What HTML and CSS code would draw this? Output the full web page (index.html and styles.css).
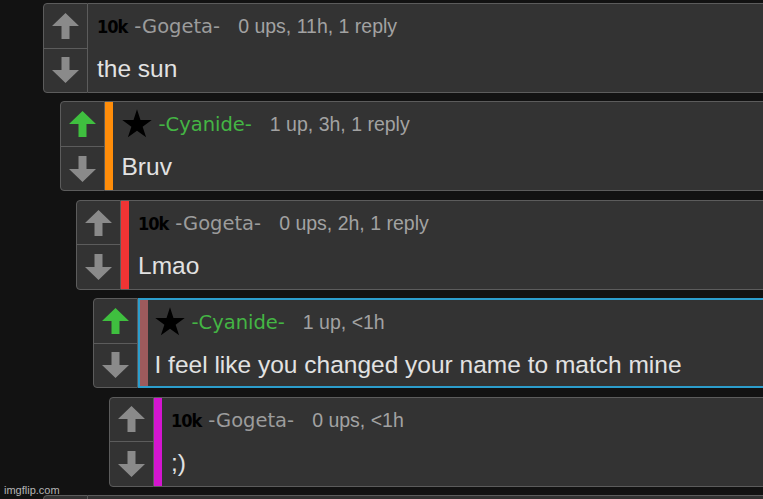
FILE: index.html
```html
<!DOCTYPE html>
<html>
<head>
<meta charset="utf-8">
<link rel="stylesheet" href="styles.css">
</head>
<body>
<div class="thread">

  <div class="comment lvl0">
    <div class="votes">
      <div class="vote"><svg class="arrow" width="27" height="26" viewBox="0 0 27 26"><path d="M13.5 0 L27 13 H17.5 V26 H9.5 V13 H0 Z"/></svg></div>
      <div class="vote"><svg class="arrow" width="27" height="26" viewBox="0 0 27 26"><path d="M13.5 26 L27 13 H17.5 V0 H9.5 V13 H0 Z"/></svg></div>
    </div>
    <div class="main">
      <div class="content">
        <div class="head"><span class="badge">10k</span><span class="name">-Gogeta-</span><span class="meta">0 ups, 11h, 1 reply</span></div>
        <div class="text">the sun</div>
      </div>
    </div>
  </div>

  <div class="comment lvl1">
    <div class="votes">
      <div class="vote"><svg class="arrow up-on" width="27" height="26" viewBox="0 0 27 26"><path d="M13.5 0 L27 13 H17.5 V26 H9.5 V13 H0 Z"/></svg></div>
      <div class="vote"><svg class="arrow" width="27" height="26" viewBox="0 0 27 26"><path d="M13.5 26 L27 13 H17.5 V0 H9.5 V13 H0 Z"/></svg></div>
    </div>
    <div class="main">
      <div class="bar orange"></div>
      <div class="content">
        <div class="head"><svg class="star" width="30" height="29" viewBox="0 0 30 29"><polygon points="15,0.3 18.48,11.01 29.74,11.01 20.63,17.63 24.11,28.34 15,21.72 5.89,28.34 9.37,17.63 0.26,11.01 11.52,11.01"/></svg><span class="name green">-Cyanide-</span><span class="meta">1 up, 3h, 1 reply</span></div>
        <div class="text">Bruv</div>
      </div>
    </div>
  </div>

  <div class="comment lvl2">
    <div class="votes">
      <div class="vote"><svg class="arrow" width="27" height="26" viewBox="0 0 27 26"><path d="M13.5 0 L27 13 H17.5 V26 H9.5 V13 H0 Z"/></svg></div>
      <div class="vote"><svg class="arrow" width="27" height="26" viewBox="0 0 27 26"><path d="M13.5 26 L27 13 H17.5 V0 H9.5 V13 H0 Z"/></svg></div>
    </div>
    <div class="main">
      <div class="bar red"></div>
      <div class="content">
        <div class="head"><span class="badge">10k</span><span class="name">-Gogeta-</span><span class="meta">0 ups, 2h, 1 reply</span></div>
        <div class="text">Lmao</div>
      </div>
    </div>
  </div>

  <div class="comment lvl3">
    <div class="votes">
      <div class="vote"><svg class="arrow up-on" width="27" height="26" viewBox="0 0 27 26"><path d="M13.5 0 L27 13 H17.5 V26 H9.5 V13 H0 Z"/></svg></div>
      <div class="vote"><svg class="arrow" width="27" height="26" viewBox="0 0 27 26"><path d="M13.5 26 L27 13 H17.5 V0 H9.5 V13 H0 Z"/></svg></div>
    </div>
    <div class="main highlight">
      <div class="bar brown"></div>
      <div class="content">
        <div class="head"><svg class="star" width="30" height="29" viewBox="0 0 30 29"><polygon points="15,0.3 18.48,11.01 29.74,11.01 20.63,17.63 24.11,28.34 15,21.72 5.89,28.34 9.37,17.63 0.26,11.01 11.52,11.01"/></svg><span class="name green">-Cyanide-</span><span class="meta">1 up, &lt;1h</span></div>
        <div class="text">I feel like you changed your name to match mine</div>
      </div>
    </div>
  </div>

  <div class="comment lvl4">
    <div class="votes">
      <div class="vote"><svg class="arrow" width="27" height="26" viewBox="0 0 27 26"><path d="M13.5 0 L27 13 H17.5 V26 H9.5 V13 H0 Z"/></svg></div>
      <div class="vote"><svg class="arrow" width="27" height="26" viewBox="0 0 27 26"><path d="M13.5 26 L27 13 H17.5 V0 H9.5 V13 H0 Z"/></svg></div>
    </div>
    <div class="main">
      <div class="bar magenta"></div>
      <div class="content">
        <div class="head"><span class="badge">10k</span><span class="name">-Gogeta-</span><span class="meta">0 ups, &lt;1h</span></div>
        <div class="text">;)</div>
      </div>
    </div>
  </div>

  <div class="comment lvl0">
    <div class="votes">
      <div class="vote"><svg class="arrow" width="27" height="26" viewBox="0 0 27 26"><path d="M13.5 0 L27 13 H17.5 V26 H9.5 V13 H0 Z"/></svg></div>
      <div class="vote"><svg class="arrow" width="27" height="26" viewBox="0 0 27 26"><path d="M13.5 26 L27 13 H17.5 V0 H9.5 V13 H0 Z"/></svg></div>
    </div>
    <div class="main">
      <div class="content">
        <div class="head"></div>
        <div class="text"></div>
      </div>
    </div>
  </div>

</div>
<div class="watermark">imgflip.com</div>
</body>
</html>
```

FILE: styles.css
```css
html, body {
  margin: 0;
  padding: 0;
  overflow: hidden;
  background: #121212;
  width: 763px;
  height: 499px;
}
body {
  position: relative;
  font-family: "Liberation Sans", Arial, sans-serif;
}
.thread {
  width: 900px;
  padding: 3px 0 0 43px;
  display: flex;
  flex-direction: column;
  gap: 8.4px;
}
.comment {
  display: flex;
  height: 90px;
}
.lvl1 { margin-left: 16.5px; }
.lvl2 { margin-left: 33px; }
.lvl3 { margin-left: 49.5px; }
.lvl4 { margin-left: 66px; }

.votes {
  box-sizing: border-box;
  width: 45px;
  flex: none;
  display: flex;
  flex-direction: column;
  border: 1px solid #5c5c5c;
  border-radius: 4px 0 0 4px;
  background: #333333;
}
.vote {
  flex: 1;
  display: flex;
  align-items: center;
  justify-content: center;
}
.vote + .vote {
  border-top: 1px solid #5c5c5c;
}
.arrow { fill: #8a8a8a; display: block; }
.arrow.up-on { fill: #3fbf3f; }

.main {
  box-sizing: border-box;
  flex: 1;
  display: flex;
  border: 1px solid #5c5c5c;
  border-left: none;
  border-radius: 0 4px 4px 0;
  background: #333333;
}
.main.highlight {
  border: 2px solid #2c9dcc;
}
.bar { width: 8px; flex: none; }
.orange { background: #ff8d0a; }
.red { background: #f03434; }
.brown { background: #9e5a5c; }
.magenta { background: #d415d0; }

.content {
  flex: 1;
  padding-left: 9px;
  white-space: nowrap;
}
.highlight .content { padding-left: 7px; }
.head {
  height: 44px;
  line-height: 44px;
}
.badge {
  font-family: "DejaVu Sans Condensed", "DejaVu Sans", sans-serif;
  font-stretch: condensed;
  font-weight: bold;
  font-size: 18px;
  letter-spacing: -1px;
  color: #000;
  margin-right: 7px;
}
.star {
  fill: #000;
  vertical-align: -7px;
  margin-right: 7px;
}
.name {
  font-family: "DejaVu Sans", Verdana, sans-serif;
  font-size: 19.5px;
  color: #9c9c9c;
  margin-right: 18px;
}
.name.green { color: #44b544; }
.meta {
  font-size: 19.5px;
  color: #a2a2a2;
}
.text {
  font-size: 24.5px;
  line-height: 42px;
  color: #e2e2e2;
}
.watermark {
  position: absolute;
  left: 4px;
  top: 484px;
  font-size: 11px;
  color: #b5b5b5;
}
```
